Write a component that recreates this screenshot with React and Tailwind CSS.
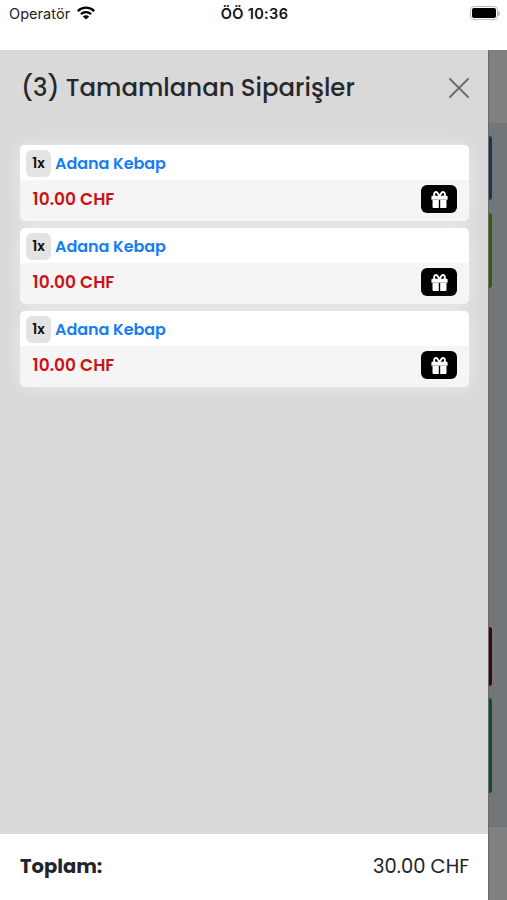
import React from "react";

const orders = [
  { id: 1, count: 1, name: "Adana Kebap", price: "10.00" },
  { id: 2, count: 1, name: "Adana Kebap", price: "10.00" },
  { id: 3, count: 1, name: "Adana Kebap", price: "10.00" },
];

const GiftIcon = () => (
  <svg width="17" height="17" viewBox="0 0 17 17" fill="currentColor">
    {/* Bow */}
    <path
      d="M8.5 5.6C7.4 2.8 6.3 1 4.9 1 2.8 1 2.4 4.4 4 5.6M8.5 5.6C9.6 2.8 10.7 1 12.1 1c2.1 0 2.5 3.4.9 4.6"
      fill="none"
      stroke="currentColor"
      strokeWidth="1.9"
    />
    {/* Lid and box */}
    <path d="M1.4 4.7h14.2c.6 0 1 .4 1 1v3H.4v-3c0-.6.4-1 1-1Z" />
    <path d="M1.5 9.1h6.3V17h-5c-.7 0-1.3-.6-1.3-1.3ZM9.2 9.1h6.3v6.6c0 .7-.6 1.3-1.3 1.3h-5Z" />
  </svg>
);

const StatusBar = () => (
  <div className="h-[50px] shrink-0 bg-white grid grid-cols-3 items-start pt-1 pl-[9px] pr-[7px] text-black font-['Inter',sans-serif]">
    <div className="flex items-center gap-[7px] h-[19px]">
      <span className="text-[14.5px] leading-[19px] tracking-[0.05px] text-[#222]">
        Operatör
      </span>
      {/* Wifi */}
      <svg width="18" height="14" viewBox="0 0 18 14" className="-mt-0.5">
        <g fill="none" stroke="#000" strokeWidth="2.3">
          <path d="M.8 5.1C5.4.5 12.6.5 17.2 5.1" />
          <path d="M3.9 8.2C6.8 5.4 11.2 5.4 14.1 8.2" />
        </g>
        <path d="M9 13.6 5.8 10.4C7.6 8.8 10.4 8.8 12.2 10.4Z" fill="#000" />
      </svg>
    </div>
    <span className="text-center text-[14.5px] leading-[19px] tracking-[0.35px] font-semibold text-[#111]">
      ÖÖ 10:36
    </span>
    {/* Battery */}
    <div className="flex items-center justify-end h-[18px]">
      <div className="w-7 h-[14px] rounded-[4px] border-[1.5px] border-[#bdbdbd] p-px">
        <div className="w-full h-full rounded-[2px] bg-black" />
      </div>
      <div className="w-[2px] h-[5px] rounded-r-full bg-[#bdbdbd]" />
    </div>
  </div>
);

const OrderCard = ({ order }) => (
  <div className="h-[76px] rounded-[5px] overflow-hidden bg-[#f5f5f5] shadow-[0_0_20px_rgba(255,255,255,0.5)]">
    <div className="h-[35px] bg-white flex items-center pl-1.5 gap-1">
      <span className="w-[25px] h-[27px] mt-0.5 rounded-[6px] bg-[#e3e3e3] flex items-center justify-center text-[14px] tracking-[-0.1px] font-semibold text-[#111]">
        {order.count}x
      </span>
      <span className="pt-0.5 text-[16px] leading-6 tracking-[-0.05px] font-semibold text-[#147df5]">
        {order.name}
      </span>
    </div>
    <div className="h-[41px] flex items-center justify-between pl-[12.5px] pr-3 pb-[3px]">
      <span className="pt-px text-[17px] font-semibold text-[#c91417]">
        {order.price} CHF
      </span>
      <button
        type="button"
        aria-label="Hediye"
        className="w-9 h-7 rounded-[6px] bg-black text-white flex items-center justify-center"
      >
        <GiftIcon />
      </button>
    </div>
  </div>
);

// Page edge that stays visible behind the drawer
const Backdrop = () => (
  <div className="flex-1 bg-[#737678] flex flex-col border-l border-[#686a6c]">
    <div className="h-[73px] bg-[#808080]" />
    <div className="mt-[13px] w-[3px] h-[64px] rounded-r-[3px] bg-[#20344d]" />
    <div className="mt-[13px] w-[3px] h-[75px] rounded-r-[3px] bg-[#325c06]" />
    <div className="mt-[339px] w-[3px] h-[59px] rounded-r-[3px] bg-[#3f0808]" />
    <div className="mt-[12px] w-[3px] h-[95px] rounded-r-[3px] bg-[#0b4b3b]" />
    <div className="mt-auto h-[74px] bg-[#808080] border-t border-[#6d6f70]" />
  </div>
);

const App = () => {
  return (
    <div className="w-full h-screen flex flex-col overflow-hidden bg-white font-['Poppins','Inter',sans-serif]">
      <StatusBar />
      <div className="flex-1 min-h-0 flex">
        <div className="w-[488px] flex flex-col bg-[#d9d9d9]">
          {/* Header */}
          <div className="h-[95px] flex items-start justify-between pl-[21px] pr-[19px] pt-5">
            <h1 className="text-[24.4px] leading-9 font-medium text-[#26282c] whitespace-nowrap">
              (3) Tamamlanan Siparişler
            </h1>
            <svg
              width="20"
              height="20"
              viewBox="0 0 20 20"
              className="mt-2"
              fill="none"
              stroke="#6f6f6f"
              strokeWidth="2"
              strokeLinecap="round"
            >
              <path d="M1 1 19 19M19 1 1 19" />
            </svg>
          </div>

          {/* Orders */}
          <div className="flex-1 pl-5 pr-[19px] flex flex-col gap-[7px]">
            {orders.map((order) => (
              <OrderCard key={order.id} order={order} />
            ))}
          </div>

          {/* Total */}
          <div className="h-[66px] bg-white flex items-center justify-between pl-5 pr-[19px] text-[#212529]">
            <span className="text-[19.5px] font-bold">Toplam:</span>
            <span className="text-[19.5px]">30.00 CHF</span>
          </div>
        </div>
        <Backdrop />
      </div>
    </div>
  );
};

export default App;
